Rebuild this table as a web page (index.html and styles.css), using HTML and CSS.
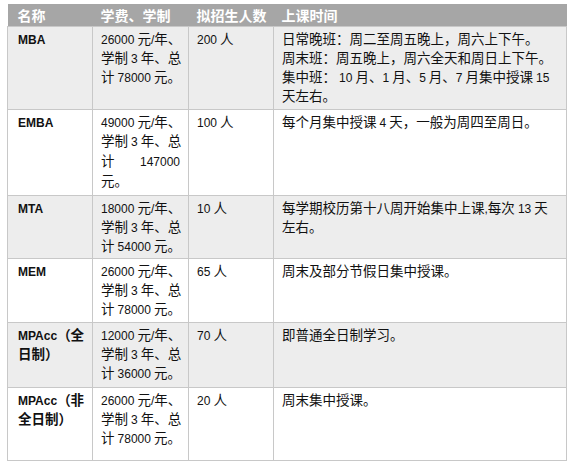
FILE: index.html
```html
<!DOCTYPE html>
<html lang="zh">
<head>
<meta charset="utf-8">
<title>招生信息</title>
<link rel="stylesheet" href="styles.css">
</head>
<body>
<div class="page">
<table class="grid">
  <colgroup>
    <col class="c1"><col class="c2"><col class="c3"><col class="c4">
  </colgroup>
  <thead>
    <tr><th class="first">名称</th><th>学费、学制</th><th>拟招生人数</th><th>上课时间</th></tr>
  </thead>
  <tbody>
    <tr class="alt r-mba">
      <td class="name"><span class="n">MBA</span></td>
      <td><span class="n">26000</span> 元<span class="n">/</span>年、<br>学制 <span class="n">3</span> 年、总<br>计 <span class="n">78000</span> 元。</td>
      <td><span class="n">200</span> 人</td>
      <td>日常晚班：周二至周五晚上，周六上下午。<br>周末班：周五晚上，周六全天和周日上下午。<br>集中班： <span class="n">10</span> 月、<span class="n">1</span> 月、<span class="n">5</span> 月、<span class="n">7</span> 月集中授课 <span class="n">15</span><br>天左右。</td>
    </tr>
    <tr class="r-emba">
      <td class="name"><span class="n">EMBA</span></td>
      <td><span class="n">49000</span> 元<span class="n">/</span>年、<br>学制 <span class="n">3</span> 年、总<br><span class="spread"><span>计</span><span class="n">147000</span></span>元。</td>
      <td><span class="n">100</span> 人</td>
      <td>每个月集中授课 <span class="n">4</span> 天，一般为周四至周日。</td>
    </tr>
    <tr class="alt r-mta">
      <td class="name"><span class="n">MTA</span></td>
      <td><span class="n">18000</span> 元<span class="n">/</span>年、<br>学制 <span class="n">3</span> 年、总<br>计 <span class="n">54000</span> 元。</td>
      <td><span class="n">10</span> 人</td>
      <td>每学期校历第十八周开始集中上课<span class="n">,</span>每次 <span class="n">13</span> 天<br>左右。</td>
    </tr>
    <tr class="r-mem">
      <td class="name"><span class="n">MEM</span></td>
      <td><span class="n">26000</span> 元<span class="n">/</span>年、<br>学制 <span class="n">3</span> 年、总<br>计 <span class="n">78000</span> 元。</td>
      <td><span class="n">65</span> 人</td>
      <td>周末及部分节假日集中授课。</td>
    </tr>
    <tr class="alt r-mpf">
      <td class="name"><span class="n">MPAcc</span>（全<br>日制）</td>
      <td><span class="n">12000</span> 元<span class="n">/</span>年、<br>学制 <span class="n">3</span> 年、总<br>计 <span class="n">36000</span> 元。</td>
      <td><span class="n">70</span> 人</td>
      <td>即普通全日制学习。</td>
    </tr>
    <tr class="r-mpn">
      <td class="name"><span class="n">MPAcc</span>（非<br>全日制）</td>
      <td><span class="n">26000</span> 元<span class="n">/</span>年、<br>学制 <span class="n">3</span> 年、总<br>计 <span class="n">78000</span> 元。</td>
      <td><span class="n">20</span> 人</td>
      <td>周末集中授课。</td>
    </tr>
  </tbody>
</table>
</div>
</body>
</html>
```

FILE: styles.css
```css
html, body {
  margin: 0;
  padding: 0;
  background: #ffffff;
}

.page {
  padding: 4px 0 0 7px;
}

.grid {
  border-collapse: collapse;
  table-layout: fixed;
  width: 559px;
  font-family: "Noto Sans CJK SC", "Noto Sans", sans-serif;
  font-size: 13.5px;
  line-height: 19px;
  color: #111111;
}

.c1 { width: 85px; }
.c2 { width: 96px; }
.c3 { width: 85px; }
.c4 { width: 293px; }

.grid th {
  background: #a6a6a6;
  color: #ffffff;
  font-weight: 700;
  font-size: 14px;
  text-align: left;
  height: 22px;
  padding: 0 8px;
  line-height: 22px;
  white-space: nowrap;
}

.grid th.first {
  padding-left: 10px;
}

.grid td {
  border: 1px solid #c8c8c8;
  vertical-align: top;
  padding: 2px 8px 1px 8px;
  white-space: nowrap;
}

.r-mba { height: 83px; }
.r-emba { height: 86px; }
.r-mta { height: 63px; }
.r-mem { height: 64px; }
.r-mpf { height: 65px; }
.r-mpn { height: 73px; }

.grid tr.alt td {
  background: #ededed;
}

.grid td.name {
  font-weight: 700;
  padding-left: 10px;
}

.n {
  font-family: "Liberation Sans", Arial, sans-serif;
  font-size: 12px;
  line-height: 1;
}

.spread {
  display: flex;
  justify-content: space-between;
  align-items: baseline;
  line-height: 21px;
}
```
